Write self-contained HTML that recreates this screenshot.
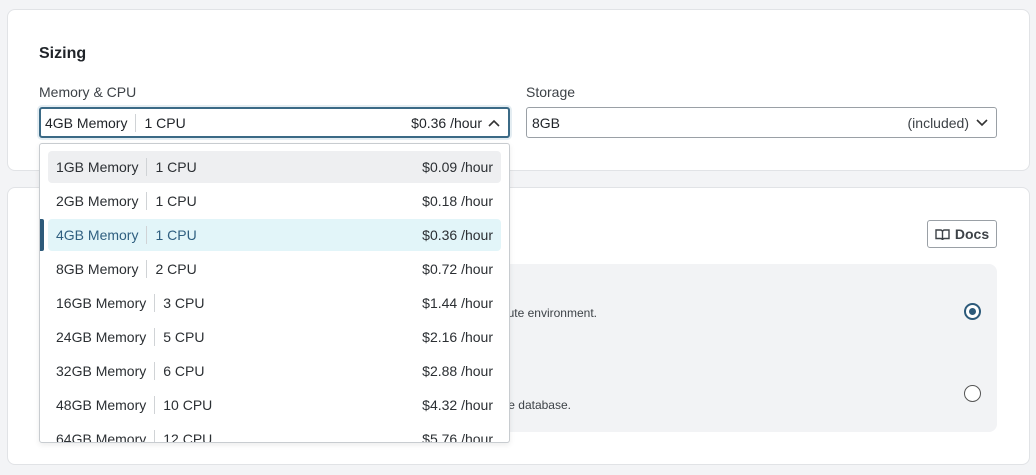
<!DOCTYPE html>
<html><head><style>
*{box-sizing:border-box;margin:0;padding:0}
body{width:1036px;height:475px;background:#f3f4f6;font-family:"Liberation Sans",sans-serif;color:#1f2328;position:relative;overflow:hidden}
.card{position:absolute;left:7px;width:1023px;background:#fff;border:1px solid #e1e3e6;border-radius:8px}
.abs{position:absolute}
.sel{position:absolute;height:31px;border:1px solid #9aa0a6;border-radius:3px;background:#fff;font-size:14px;display:flex;align-items:center;padding:0 6px}
.dd{position:absolute;left:39px;top:143px;width:471px;height:300px;background:#fff;border:1px solid #c8ccd0;border-radius:3px;box-shadow:0 2px 6px rgba(0,0,0,.08);overflow:hidden}
.it{position:absolute;left:8px;width:453px;height:32px;border-radius:4px;font-size:14px;color:#2b2f33;display:flex;align-items:center;padding:0 8px}
.it .d{display:inline-block;width:1px;height:18px;background:#d0d3d6;margin:0 8px}
.it .p{margin-left:auto}
</style></head><body>
<div class="card" style="top:9px;height:162px"></div>
<div class="abs" style="left:39px;top:45px;font-size:16px;font-weight:bold">Sizing</div>
<div class="abs" style="left:39px;top:84px;font-size:14px;color:#3d4247">Memory &amp; CPU</div>
<div class="abs" style="left:526px;top:84px;font-size:14px;color:#3d4247">Storage</div>
<div class="sel" style="left:39px;top:107px;width:471px;border:2px solid #3b6a86;box-shadow:0 0 0 2px #e4edf2;padding:0 8px 0 4px">4GB Memory<span style="display:inline-block;width:1px;height:18px;background:#d0d3d6;margin:0 8px"></span>1 CPU<span style="margin-left:auto">$0.36 /hour</span>
<svg width="12" height="8" style="margin-left:6px" viewBox="0 0 12 8"><path d="M1 7 6 2l5 5" fill="none" stroke="#333" stroke-width="1.6"/></svg></div>
<div class="sel" style="left:526px;top:107px;width:471px;padding:0 8px 0 5px">8GB<span style="margin-left:auto;color:#3d4247">(included)</span>
<svg width="12" height="8" style="margin-left:7px" viewBox="0 0 12 8"><path d="M1 1l5 5 5-5" fill="none" stroke="#333" stroke-width="1.6"/></svg></div>

<div class="card" style="top:187px;height:278px"></div>
<div class="abs" style="left:927px;top:220px;width:70px;height:28px;border:1px solid #9aa0a6;border-radius:3px;font-size:14px;font-weight:bold;color:#3d4247;display:flex;align-items:center;justify-content:center;gap:5px">
<svg width="15" height="13" viewBox="0 0 15 13"><path d="M1 2h4.5c1 0 2 .8 2 2v8c0-1-1-1.5-2-1.5H1zM14 2H9.5c-1 0-2 .8-2 2v8c0-1 1-1.5 2-1.5H14z" fill="none" stroke="#3d4247" stroke-width="1.4"/></svg>Docs</div>
<div class="abs" style="left:39px;top:264px;width:958px;height:168px;background:#f2f3f5;border-radius:8px"></div>
<div class="abs" style="left:300px;width:297px;text-align:right;top:306px;font-size:12px;color:#3d4247">Run on a dedicated compute environment.</div>
<div class="abs" style="left:300px;width:271px;text-align:right;top:398px;font-size:12px;color:#3d4247">Run on a standalone database.</div>
<div class="abs" style="left:964px;top:303px;width:17px;height:17px;border-radius:50%;border:2px solid #2d5a7a;background:#fff"><div style="position:absolute;left:3px;top:3px;width:7px;height:7px;border-radius:50%;background:#2d5a7a"></div></div>
<div class="abs" style="left:964px;top:385px;width:17px;height:17px;border-radius:50%;border:1px solid #555;background:#fff"></div>

<div class="dd">
<div class="it" style="top:7px;background:#eeeff1">1GB Memory<span class="d"></span>1 CPU<span class="p">$0.09 /hour</span></div>
<div class="it" style="top:41px">2GB Memory<span class="d"></span>1 CPU<span class="p">$0.18 /hour</span></div>
<div class="abs" style="left:0;top:75px;width:4px;height:32px;background:#2d5a7a;border-radius:0 2px 2px 0"></div>
<div class="it" style="top:75px;background:#e2f5f9;color:#2f5f80">4GB Memory<span class="d"></span>1 CPU<span class="p" style="color:#2b2f33">$0.36 /hour</span></div>
<div class="it" style="top:109px">8GB Memory<span class="d"></span>2 CPU<span class="p">$0.72 /hour</span></div>
<div class="it" style="top:143px">16GB Memory<span class="d"></span>3 CPU<span class="p">$1.44 /hour</span></div>
<div class="it" style="top:177px">24GB Memory<span class="d"></span>5 CPU<span class="p">$2.16 /hour</span></div>
<div class="it" style="top:211px">32GB Memory<span class="d"></span>6 CPU<span class="p">$2.88 /hour</span></div>
<div class="it" style="top:245px">48GB Memory<span class="d"></span>10 CPU<span class="p">$4.32 /hour</span></div>
<div class="it" style="top:279px">64GB Memory<span class="d"></span>12 CPU<span class="p">$5.76 /hour</span></div>
</div>
</body></html>
